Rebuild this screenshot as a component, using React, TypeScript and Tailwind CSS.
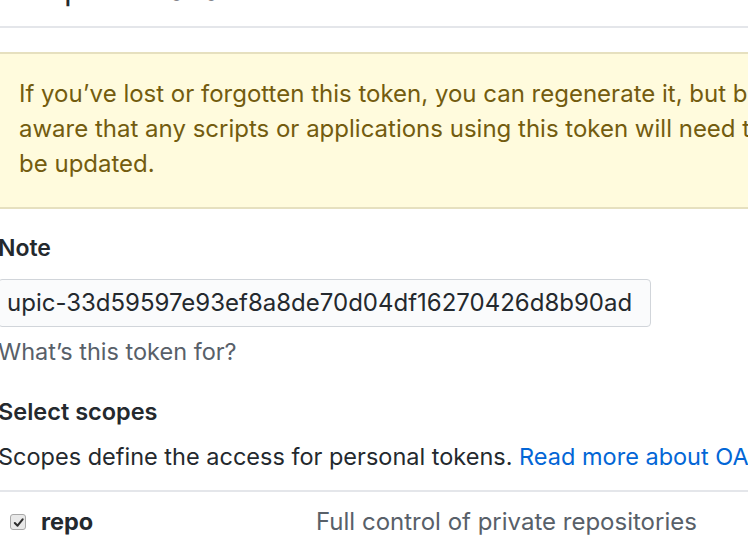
import React from "react";

export default function App() {
  return (
    <div className="w-[748px] h-[542px] overflow-hidden bg-white font-['Inter','Liberation_Sans',sans-serif] text-[#24292e]">
      <div className="-ml-[2px] w-[1000px]">
        <div className="-mt-[31px] pb-[17px] border-b-2 border-[#e4e6ea] text-[32px] leading-[40px] text-[#24292e] whitespace-nowrap">
          Edit personal access token
        </div>
        <div className="mt-[24px] border-y-2 border-[#e6e0bf] bg-[#fffbdd] pl-[21px] pt-[22px] pb-[26px] text-[24px] leading-[35px] text-[#735c0f] whitespace-nowrap">
          If you’ve lost or forgotten this token, you can regenerate it, but be
          <br />
          aware that any scripts or applications using this token will need to
          <br />
          be updated.
        </div>
        <div className="mt-[21px] text-[23px] leading-[36px] font-semibold">Note</div>
        <div className="mt-[13px] w-[653px] h-[48px] flex items-center pl-[8px] border border-[#d1d5da] rounded-[4px] bg-[#fafbfc] text-[24px] text-[#24292e] whitespace-nowrap">
          upic-33d59597e93ef8a8de70d04df16270426d8b90ad
        </div>
        <div className="mt-[7px] text-[23.5px] leading-[36px] text-[#586069]">What’s this token for?</div>
        <div className="mt-[24px] text-[23.5px] leading-[36px] font-semibold">Select scopes</div>
        <div className="mt-[9px] text-[23.5px] leading-[36px] whitespace-nowrap">
          Scopes define the access for personal tokens.{" "}
          <span className="text-[#0366d6]">Read more about OAuth scopes.</span>
        </div>
        <div className="mt-[15px] border-t-2 border-[#e4e6ea] flex items-center pt-[12px] text-[23.5px] leading-[36px]">
          <div className="ml-[12px] w-[16px] h-[16px] rounded-[3px] border border-[#a8a8a8] bg-[#e9e9e9] flex items-center justify-center">
            <svg width="11" height="11" viewBox="0 0 12 12">
              <path d="M2 6.5 L5 9.5 L10.5 2.5" fill="none" stroke="#2e2e2e" strokeWidth="2.2" strokeLinecap="round" strokeLinejoin="round" />
            </svg>
          </div>
          <div className="ml-[15px] w-[275px] font-bold">repo</div>
          <div className="text-[24px] text-[#586069]">Full control of private repositories</div>
        </div>
      </div>
    </div>
  );
}
